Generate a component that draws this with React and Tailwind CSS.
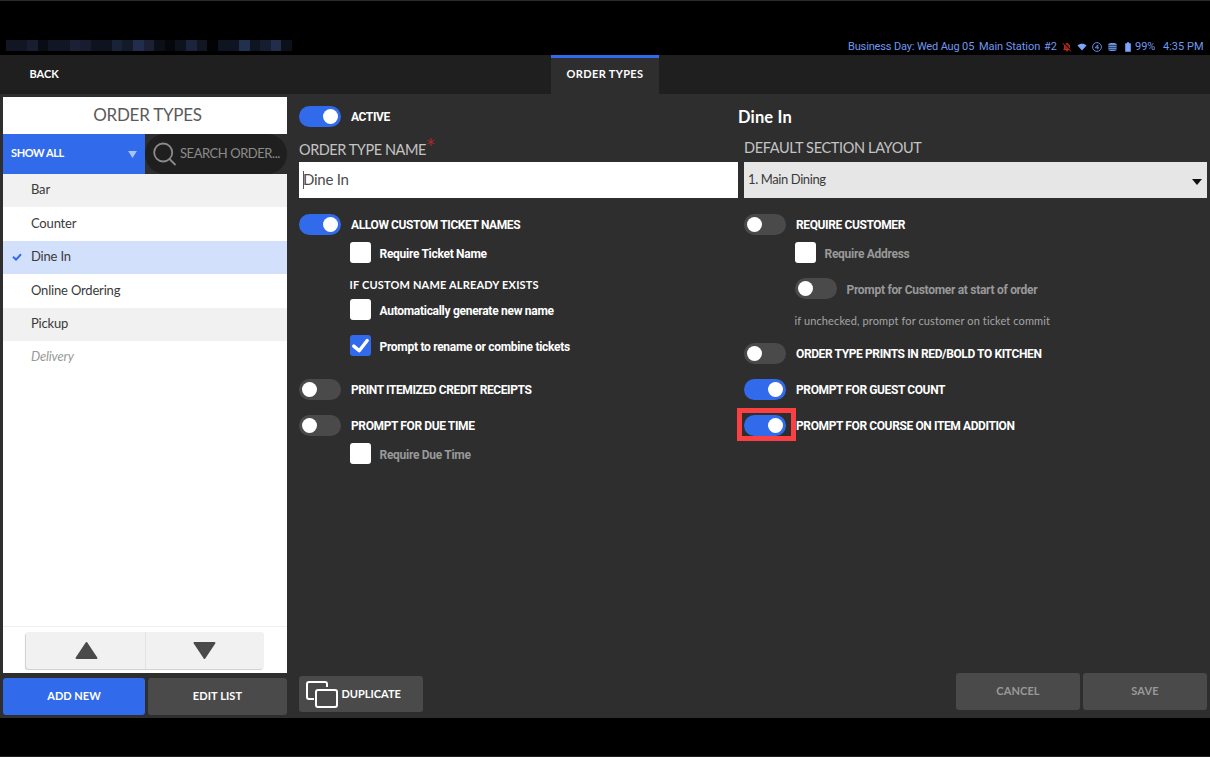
import { useState } from "react";
import { clsx } from "clsx";

const orderTypes = [
  { name: "Bar", shaded: true },
  { name: "Counter" },
  { name: "Dine In" },
  { name: "Online Ordering" },
  { name: "Pickup", shaded: true },
  { name: "Delivery", inactive: true },
];

// blurred-out store name in the status bar
const maskedBlocks = [
  { w: "w-[21px]", c: "bg-[#121522]" },
  { w: "w-[11px]", c: "bg-[#181d30]" },
  { w: "w-[10px]", c: "bg-[#090c14]" },
  { w: "w-[22px]", c: "bg-[#101624]" },
  { w: "w-[10px]", c: "bg-[#1b2034]" },
  { w: "w-[11px]", c: "bg-[#171d2e]" },
  { w: "w-[21px]", c: "bg-[#0f131f]" },
  { w: "w-[10px]", c: "bg-[#192338]" },
  { w: "w-[11px]", c: "bg-[#131a29]" },
  { w: "w-[11px]", c: "bg-[#222c4b]" },
  { w: "w-[10px]", c: "bg-[#1b2034]" },
  { w: "w-[11px]", c: "bg-[#0b0f18]" },
  { w: "w-[10px]", c: "bg-[#05070b]" },
  { w: "w-[11px]", c: "bg-[#0d121d]" },
  { w: "w-[11px]", c: "bg-[#1b243a]" },
  { w: "w-[10px]", c: "bg-[#111620]" },
  { w: "w-[11px]", c: "bg-[#020305]" },
  { w: "w-[21px]", c: "bg-[#0e1420]" },
  { w: "w-[11px]", c: "bg-[#22304f]" },
  { w: "w-[10px]", c: "bg-[#0f1520]" },
  { w: "w-[11px]", c: "bg-[#151e30]" },
  { w: "w-[10px]", c: "bg-[#222c4b]" },
  { w: "w-[11px]", c: "bg-[#0b1019]" },
];

function RowLabel({ children, caps, muted }) {
  return (
    <span
      className={clsx(
        "whitespace-nowrap font-['Roboto',sans-serif] text-[12px] font-bold",
        caps ? "pt-px tracking-[-0.39px]" : "pt-[2px] tracking-[-0.29px]",
        muted ? "text-[#999]" : "text-white"
      )}
    >
      {children}
    </span>
  );
}

function ToggleRow({ label, defaultOn = false, muted, highlighted, className }) {
  const [on, setOn] = useState(defaultOn);
  return (
    <div className={clsx("relative flex h-[21px] items-center gap-[10px]", className)}>
      <button
        type="button"
        role="switch"
        aria-checked={on}
        onClick={() => setOn(!on)}
        className={clsx(
          "flex h-[21px] w-[42px] shrink-0 items-center rounded-full",
          on ? "justify-end bg-[#316bec] pr-[3px]" : "justify-start bg-[#4a4a4a] pl-[3px]"
        )}
      >
        <span className="h-[15px] w-[15px] rounded-full bg-white" />
      </button>
      <RowLabel caps={!muted} muted={muted}>{label}</RowLabel>
      {highlighted && (
        <span className="pointer-events-none absolute -left-[7px] -top-[7px] h-[33px] w-[59px] border-[5px] border-[#fb4044]" />
      )}
    </div>
  );
}

function CheckRow({ label, defaultChecked = false, muted, className }) {
  const [checked, setChecked] = useState(defaultChecked);
  return (
    <div className={clsx("flex h-[21px] items-center gap-[9px]", className)}>
      <button
        type="button"
        role="checkbox"
        aria-checked={checked}
        onClick={() => setChecked(!checked)}
        className={clsx("h-[21px] w-[21px] shrink-0 rounded-[3px]", checked ? "bg-[#316bec]" : "bg-white")}
      >
        {checked && (
          <svg viewBox="0 0 20 20" className="h-[21px] w-[21px]" fill="none">
            <path d="M3.6 10.6 8.8 15 16.4 5.2" stroke="#fff" strokeWidth="3.2" strokeLinecap="round" strokeLinejoin="round" />
          </svg>
        )}
      </button>
      <RowLabel muted={muted}>{label}</RowLabel>
    </div>
  );
}

function StatusBar() {
  return (
    <div className="flex h-[55px] items-start justify-between border-t border-[#2b2b2b] bg-black px-[6px]">
      <div className="mt-[39px] flex h-[11px]">
        {maskedBlocks.map((b, i) => (
          <span key={i} className={clsx("h-full", b.w, b.c)} />
        ))}
      </div>
      <div className="mt-[37px] flex h-[17px] items-center font-['Roboto',sans-serif] text-[11px] text-[#6f98ee]">
        <span className="w-[131px] whitespace-nowrap pt-px tracking-[-0.15px]">Business Day: Wed Aug 05</span>
        <span className="w-[65px] whitespace-nowrap pt-px tracking-[-0.05px]">Main Station</span>
        <span className="w-[18px] pt-px">#2</span>
        <svg viewBox="0 0 10 10" className="mr-[5px] h-[10px] w-[10px]" fill="none">
          <path d="M1.8 7.6h6.4L7.4 6V4.2C7.4 2.6 6.4 1.6 5 1.6S2.6 2.6 2.6 4.2V6zM4 8.8h2" fill="#7d1f19" stroke="#c23328" strokeWidth="1" />
          <path d="M1.4 .8l8 8" stroke="#000" strokeWidth="1.2" />
          <path d="M.6 1.2l8.2 8.2" stroke="#c23328" strokeWidth="1" />
        </svg>
        <svg viewBox="0 0 10 8" className="mr-[5px] h-[8px] w-[10px]" fill="#7ba5ff">
          <path d="M.5 2.4C3 .2 7 .2 9.5 2.4L5 7.6z" />
        </svg>
        <svg viewBox="0 0 10 10" className="mr-[6px] h-[10px] w-[10px]" fill="none" stroke="#6f98ee">
          <circle cx="5" cy="5" r="4.4" strokeWidth=".9" />
          <path d="M5.8 7.4V2.8L3.2 5.8h3.6" strokeWidth=".9" />
        </svg>
        <svg viewBox="0 0 10 10" className="mr-[8px] h-[10px] w-[9px]" fill="#6f98ee">
          <path d="M.5 2C.5.2 9.5.2 9.5 2v6c0 2-9 2-9 0z" />
          <path d="M.5 3.2h9M.5 5.4h9M.5 7.6h9" stroke="#000" strokeWidth=".7" />
        </svg>
        <svg viewBox="0 0 6 10" className="mr-[4px] h-[10px] w-[6px]" fill="#7ba5ff">
          <path d="M2 .3h2v1h1.8v8.5H.2V1.3H2z" />
        </svg>
        <span className="w-[28px] pt-px">99%</span>
        <span className="w-[41px] whitespace-nowrap pt-px">4:35 PM</span>
      </div>
    </div>
  );
}

function Sidebar() {
  const [selected, setSelected] = useState("Dine In");
  return (
    <aside className="flex w-[284px] flex-col">
      <div className="flex h-[576px] flex-col bg-white">
        <h2 className="h-[37px] pl-[5px] text-center text-[17px] leading-[35px] tracking-[-0.25px] text-[#5a5a5a]">
          ORDER TYPES
        </h2>
        <div className="flex h-[40px] bg-[#2e2e2e]">
          <button
            type="button"
            className="flex w-[142px] items-center justify-between bg-[#316bec] pb-px pl-2 pr-[8px] text-[11px] font-bold tracking-[-0.4px] text-white"
          >
            SHOW ALL
            <svg viewBox="0 0 10 8" className="mt-[2px] h-[7px] w-[9px]" fill="#a9c4fb">
              <path d="M0 0h10L5 8z" />
            </svg>
          </button>
          <div className="flex w-[142px] items-center rounded-full bg-[#1f1f1f] pl-[8px] text-[#8b8b8b]">
            <svg viewBox="0 0 24 24" className="h-[24px] w-[24px] shrink-0" fill="none" stroke="currentColor" strokeWidth="1.8">
              <circle cx="10.2" cy="10.5" r="9" />
              <path d="M16.5 17l6 6" />
            </svg>
            <span className="whitespace-nowrap pl-[3px] text-[13px] tracking-[-0.45px]">SEARCH ORDER...</span>
          </div>
        </div>
        <ul className="flex-1">
          {orderTypes.map((t) => (
            <li
              key={t.name}
              onClick={() => setSelected(t.name)}
              className={clsx(
                "flex h-[33.4px] items-center pb-px text-[13px] tracking-[-0.18px]",
                selected === t.name ? "bg-[#d3e0fc]" : t.shaded ? "bg-[#f1f1f1]" : "bg-white",
                t.inactive ? "italic text-[#999]" : "text-[#3a3a3a]"
              )}
            >
              <span className="flex w-[28px] pl-[9px]">
                {selected === t.name && (
                  <svg viewBox="0 0 10 8" className="h-[8px] w-[10px]" fill="none">
                    <path d="M1 3.8 4 6.6 9 1.2" stroke="#316bec" strokeWidth="2" />
                  </svg>
                )}
              </span>
              {t.name}
            </li>
          ))}
        </ul>
        <div className="flex h-[47px] border-t border-[#efefef] pl-[23px] pt-[5px]">
          <div className="flex h-[37px] w-[238px] rounded-[3px] bg-[#f1f1f1] shadow-[-1px_1px_1px_#cfcfcf]">
            <button type="button" className="flex flex-1 items-center justify-center border-r border-[#e2e2e2]">
              <svg viewBox="0 0 24 20" className="ml-[2px] h-[19px] w-[23px]" fill="#4a4a4a" stroke="#4a4a4a" strokeWidth="2" strokeLinejoin="round">
                <path d="M12 2 22.5 18h-21z" />
              </svg>
            </button>
            <button type="button" className="flex flex-1 items-center justify-center">
              <svg viewBox="0 0 24 20" className="h-[19px] w-[23px]" fill="#4a4a4a" stroke="#4a4a4a" strokeWidth="2" strokeLinejoin="round">
                <path d="M12 18 1.5 2h21z" />
              </svg>
            </button>
          </div>
        </div>
      </div>
      <div className="mt-[5px] flex h-[37px] gap-[3px] text-[11px] font-bold text-white">
        <button type="button" className="w-[142px] rounded-[3px] bg-[#316bec]">ADD NEW</button>
        <button type="button" className="w-[139px] rounded-[3px] bg-[#4a4a4a] tracking-[0.1px]">EDIT LIST</button>
      </div>
    </aside>
  );
}

function OrderTypeForm() {
  return (
    <section className="ml-[12px] flex flex-1 flex-col">
      <div className="flex flex-1 gap-[6px]">
        <div className="w-[439px] pt-[9px]">
          <ToggleRow label="ACTIVE" defaultOn />
          <div className="mt-[11px] flex h-[24px] items-center pb-px text-[14.5px] tracking-[-0.45px] text-[#c4c4c4]">
            ORDER TYPE NAME
            <svg viewBox="0 0 8 8" className="mb-[15px] ml-[1px] h-[8px] w-[8px]" stroke="#b3282d" strokeWidth="1">
              <path d="M4 0v8M.5 2l7 4M.5 6l7-4" />
            </svg>
          </div>
          <div className="flex h-[36px] items-center bg-white pb-px pl-1 text-[15px] tracking-[-0.25px] text-[#4a4a4a]">
            <span className="-mr-px h-[18px] w-px bg-[#555]" />
            Dine In
          </div>
          <ToggleRow label="ALLOW CUSTOM TICKET NAMES" defaultOn className="mt-[16px]" />
          <div className="pl-[50.5px]">
            <CheckRow label="Require Ticket Name" className="mt-[7px]" />
            <p className="mt-[13px] h-[18px] text-[11px] font-bold leading-[18px] tracking-[0.18px] text-white">
              IF CUSTOM NAME ALREADY EXISTS
            </p>
            <CheckRow label="Automatically generate new name" className="mt-[5px]" />
            <CheckRow label="Prompt to rename or combine tickets" defaultChecked className="mt-[15px]" />
          </div>
          <ToggleRow label="PRINT ITEMIZED CREDIT RECEIPTS" className="mt-[23px]" />
          <ToggleRow label="PROMPT FOR DUE TIME" className="mt-[15px]" />
          <CheckRow label="Require Due Time" muted className="ml-[50.5px] mt-[7px]" />
        </div>

        <div className="w-[463px] pt-[9px]">
          <h1 className="-ml-[6px] h-[22px] text-[16.5px] font-bold leading-[23px] tracking-[0.15px] text-white">Dine In</h1>
          <div className="mt-[7px] h-[27px] text-[14.5px] leading-[26px] tracking-[-0.35px] text-[#c4c4c4]">
            DEFAULT SECTION LAYOUT
          </div>
          <div className="flex h-[36px] items-center justify-between bg-[#e6e6e6] pl-1 pr-[5px] text-[13px] tracking-[-0.4px] text-[#3a3a3a]">
            1. Main Dining
            <svg viewBox="0 0 10 6" className="mt-[3px] h-[6px] w-[10px]" fill="#111">
              <path d="M0 0h10L5 6z" />
            </svg>
          </div>
          <ToggleRow label="REQUIRE CUSTOMER" className="mt-[16px]" />
          <div className="pl-[50.5px]">
            <CheckRow label="Require Address" muted className="mt-[7px]" />
            <ToggleRow label="Prompt for Customer at start of order" muted className="mt-[15px]" />
            <p className="mt-[13px] h-[18px] text-[11px] leading-[18px] tracking-[0.12px] text-[#a5a5a5]">
              if unchecked, prompt for customer on ticket commit
            </p>
          </div>
          <ToggleRow label="ORDER TYPE PRINTS IN RED/BOLD TO KITCHEN" className="mt-[13px]" />
          <ToggleRow label="PROMPT FOR GUEST COUNT" defaultOn className="mt-[15px]" />
          <ToggleRow label="PROMPT FOR COURSE ON ITEM ADDITION" defaultOn highlighted className="mt-[15px]" />
        </div>
      </div>

      <footer className="flex h-[45px] items-start text-[11px] font-bold">
        <button
          type="button"
          className="mt-[3px] flex h-[36px] w-[124px] items-center gap-[3.5px] rounded-[3px] bg-[#4a4a4a] pl-[7px] text-white"
        >
          <svg viewBox="0 0 32 27" className="h-[27px] w-[32px]" fill="none" stroke="#fff" strokeWidth="2">
            <path d="M8 18H3a2 2 0 0 1-2-2V3a2 2 0 0 1 2-2h16a2 2 0 0 1 2 2v3" />
            <rect x="10" y="9" width="21" height="17" rx="2" />
          </svg>
          DUPLICATE
        </button>
        <button type="button" className="ml-auto h-[37px] w-[124px] rounded-[3px] bg-[#4a4a4a] tracking-[0.1px] text-[#999]">CANCEL</button>
        <button type="button" className="ml-[3px] h-[37px] w-[124px] rounded-[3px] bg-[#4a4a4a] tracking-[0.2px] text-[#999]">SAVE</button>
      </footer>
    </section>
  );
}

export default function App() {
  return (
    <div className="flex h-[757px] w-[1210px] flex-col overflow-hidden border-b border-[#202020] bg-black font-['Lato',sans-serif]">
      <StatusBar />
      <nav className="flex h-[39px] bg-[#1f1f1f] text-[11px] font-bold text-white">
        <button type="button" className="w-[551px] pl-[29.5px] text-left">BACK</button>
        <button type="button" className="w-[108px] border-t-[3px] border-[#316bec] bg-[#2e2e2e] pb-[3px] tracking-[0.35px]">
          ORDER TYPES
        </button>
      </nav>
      <main className="flex h-[624px] bg-[#2e2e2e] px-[3px] pt-[3px]">
        <Sidebar />
        <OrderTypeForm />
      </main>
    </div>
  );
}
